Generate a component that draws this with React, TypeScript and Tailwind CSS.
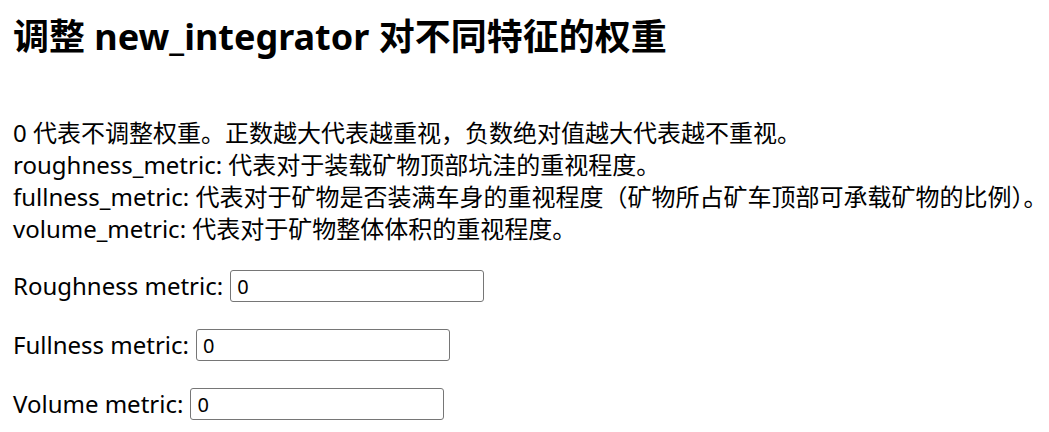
import { useState } from 'react';

const fields = [
  { label: 'Roughness metric:', key: 'roughness' },
  { label: 'Fullness metric:', key: 'fullness' },
  { label: 'Volume metric:', key: 'volume' },
];

export default function App() {
  const [values, setValues] = useState<Record<string, string>>({
    roughness: '0',
    fullness: '0',
    volume: '0',
  });

  return (
    <div className="min-h-screen bg-white px-[13px] pt-[17px] text-black font-['Noto_Sans','Noto_Sans_CJK_SC',sans-serif]">
      <h1 className="text-[36px] font-bold leading-[40px] whitespace-nowrap">调整 new_integrator 对不同特征的权重</h1>

      <p className="mt-[60px] text-[24px] leading-[32px] whitespace-nowrap">
        0 代表不调整权重。正数越大代表越重视，负数绝对值越大代表越不重视。
        <br />
        roughness_metric: 代表对于装载矿物顶部坑洼的重视程度。
        <br />
        fullness_metric: 代表对于矿物是否装满车身的重视程度（矿物所占矿车顶部可承载矿物的比例）。
        <br />
        volume_metric: 代表对于矿物整体体积的重视程度。
      </p>

      <div className="mt-[25px] flex flex-col gap-[27px]">
        {fields.map((f) => (
          <div key={f.key} className="flex items-center gap-[7px] h-[32px]">
            <label className="text-[24px] leading-[32px]">{f.label}</label>
            <input
              type="text"
              value={values[f.key]}
              onChange={(e) => setValues({ ...values, [f.key]: e.target.value })}
              className="w-[254px] h-[32px] border border-[#767676] rounded-[3px] pl-[6px] text-[20px] text-black outline-none"
            />
          </div>
        ))}
      </div>
    </div>
  );
}
